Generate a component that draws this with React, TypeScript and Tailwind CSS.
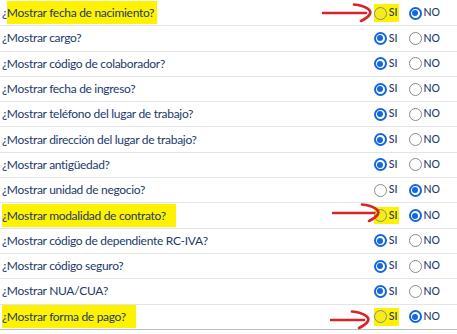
import React from "react";

type Row = {
  label: string;
  si: boolean;
  mark?: "full" | "skipFirst";
};

const rows: Row[] = [
  { label: "¿Mostrar fecha de nacimiento?", si: false, mark: "skipFirst" },
  { label: "¿Mostrar cargo?", si: true },
  { label: "¿Mostrar código de colaborador?", si: true },
  { label: "¿Mostrar fecha de ingreso?", si: true },
  { label: "¿Mostrar teléfono del lugar de trabajo?", si: true },
  { label: "¿Mostrar dirección del lugar de trabajo?", si: true },
  { label: "¿Mostrar antigüedad?", si: true },
  { label: "¿Mostrar unidad de negocio?", si: false },
  { label: "¿Mostrar modalidad de contrato?", si: false, mark: "full" },
  { label: "¿Mostrar código de dependiente RC-IVA?", si: true },
  { label: "¿Mostrar código seguro?", si: true },
  { label: "¿Mostrar NUA/CUA?", si: true },
  { label: "¿Mostrar forma de pago?", si: false, mark: "full" },
];

const Radio = ({ on, yellow }: { on: boolean; yellow?: boolean }) =>
  on ? (
    <span className="flex h-[13px] w-[13px] items-center justify-center rounded-full border-2 border-[#1467dc] bg-white">
      <span className="h-[6px] w-[6px] rounded-full bg-[#1467dc]" />
    </span>
  ) : (
    <span
      className={
        "h-[13px] w-[13px] rounded-full border border-[#8a8a8a] " +
        (yellow ? "bg-[#f5ec1c]" : "bg-white")
      }
    />
  );

const Arrow = ({ top, left, len }: { top: number; left: number; len: number }) => (
  <svg
    className="absolute"
    style={{ top, left }}
    width={len + 12}
    height={20}
    viewBox={`0 0 ${len + 12} 20`}
    fill="none"
    stroke="#d8232a"
    strokeWidth={2.6}
    strokeLinecap="round"
    strokeLinejoin="round"
  >
    <path d={`M1 10 H${len + 4}`} />
    <path d={`M${len - 8} 1.5 C${len + 3} 2.5 ${len + 10} 7 ${len + 8} 11 C${len + 6} 14.5 ${len + 2} 16.5 ${len - 1} 18`} />
  </svg>
);

const App = () => {
  return (
    <div className="relative h-[334px] w-[457px] overflow-hidden bg-white pt-[1px] font-['Lato',sans-serif] text-[#22396b]">
      {rows.map((r, i) => (
        <div
          key={i}
          className={
            "flex h-[25.3px] items-center justify-between border-b pl-[2px] pr-[17px] " +
            (i === rows.length - 1 ? "border-[#bdbdbd]" : "border-[#e4e4e4]")
          }
        >
          <span className="text-[12px] leading-none tracking-[-0.3px]">
            {r.mark === "skipFirst" ? (
              <>
                ¿<span className="bg-[#fff200] py-[4px] pr-[3px]">{r.label.slice(1)}</span>
              </>
            ) : r.mark === "full" ? (
              <span className="bg-[#fff200] py-[4px] pr-[10px]">{r.label}</span>
            ) : (
              r.label
            )}
          </span>
          <div className="flex items-center text-[10.5px] font-medium">
            <span
              className={
                "flex items-center gap-[2px] py-[1px] pr-[1px] " +
                (r.mark ? "bg-[#fff200]" : "")
              }
            >
              <Radio on={r.si} yellow={!!r.mark} />
              <span>SI</span>
            </span>
            <span className="ml-[10px] flex items-center gap-[2px]">
              <Radio on={!r.si} />
              <span>NO</span>
            </span>
          </div>
        </div>
      ))}
      <Arrow top={3} left={322} len={40} />
      <Arrow top={203} left={332} len={38} />
      <Arrow top={310} left={330} len={30} />
    </div>
  );
};

export default App;
